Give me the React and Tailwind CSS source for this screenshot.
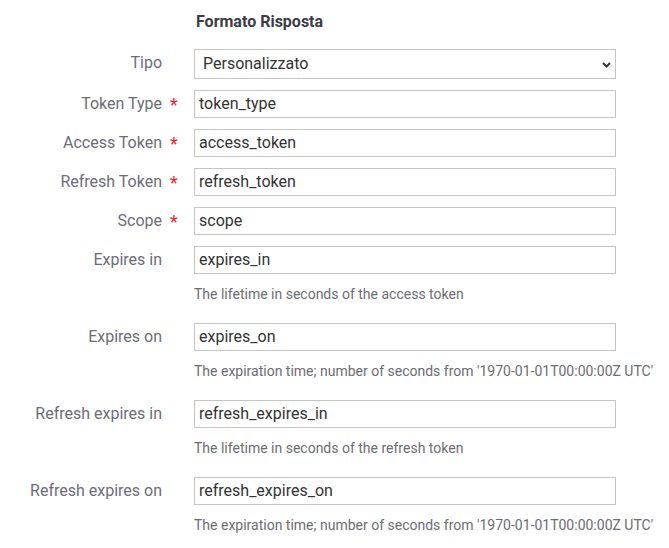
import React from "react";

const rows = [
  { label: "Token Type", value: "token_type", req: true },
  { label: "Access Token", value: "access_token", req: true },
  { label: "Refresh Token", value: "refresh_token", req: true },
  { label: "Scope", value: "scope", req: true },
  { label: "Expires in", value: "expires_in", help: "The lifetime in seconds of the access token" },
  { label: "Expires on", value: "expires_on", help: "The expiration time; number of seconds from '1970-01-01T00:00:00Z UTC'" },
  { label: "Refresh expires in", value: "refresh_expires_in", help: "The lifetime in seconds of the refresh token" },
  { label: "Refresh expires on", value: "refresh_expires_on", help: "The expiration time; number of seconds from '1970-01-01T00:00:00Z UTC'" },
];

function Row({ label, req, children }) {
  return (
    <div className="flex items-start mb-[11px]">
      <div className="w-[162px] h-[28px] shrink-0 text-right text-[16px] leading-[28px] text-[#6c6c78]">{label}</div>
      <div className="w-[32px] h-[28px] shrink-0 pl-[8px] text-[18px] leading-[30px] text-[#ee2233] overflow-visible">{req ? "*" : ""}</div>
      <div className="flex flex-col">{children}</div>
    </div>
  );
}

export default function App() {
  return (
    <div className="bg-white w-[669px] h-[548px] overflow-hidden pt-[12px]" style={{ fontFamily: "Roboto, 'Liberation Sans', sans-serif" }}>
      <div className="pl-[196px] text-[16px] leading-[20px] font-bold text-[#3c3c46] mb-[17px]">Formato Risposta</div>
      <div className="flex items-start mb-[11px]">
        <div className="w-[162px] shrink-0 text-right text-[16px] leading-[28px] text-[#6c6c78]">Tipo</div>
        <div className="w-[32px] shrink-0" />
        <div className="relative w-[422px] h-[30px] border border-[#c4c4c4] bg-white flex items-center pl-[8px] text-[16px] text-[#333]">
          Personalizzato
          <svg className="absolute right-[4px] top-[12px]" width="9" height="6" viewBox="0 0 9 6">
            <path d="M1 1 L4.5 4.5 L8 1" fill="none" stroke="#333" strokeWidth="2" />
          </svg>
        </div>
      </div>
      {rows.map((r) => (
        <Row key={r.label} label={r.label} req={r.req}>
          <div className="w-[422px] h-[28px] border border-[#c4c4c4] bg-white flex items-center pl-[4px] text-[16px] text-[#333]">
            {r.value}
          </div>
          {r.help && (
            <div className="mt-[11px] mb-[9px] text-[14px] leading-[18px] text-[#6c6c72] whitespace-nowrap">{r.help}</div>
          )}
        </Row>
      ))}
    </div>
  );
}
